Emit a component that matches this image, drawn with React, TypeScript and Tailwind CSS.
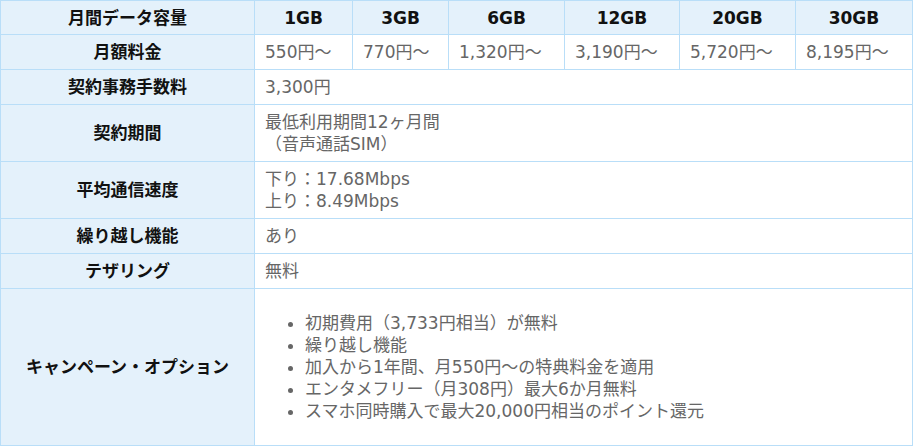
import React from "react";

const font = { fontFamily: '"DejaVu Sans", "Noto Sans CJK JP", sans-serif' };

const sizes = ["1GB", "3GB", "6GB", "12GB", "20GB", "30GB"];
const prices = ["550円～", "770円～", "1,320円～", "3,190円～", "5,720円～", "8,195円～"];

const th =
  "border border-[#b9def8] bg-[#e4f1fb] text-center align-middle font-bold text-[#111] p-0";
const td =
  "border border-[#b9def8] bg-white text-left align-middle text-[#666] pl-[10px] pr-[6px] py-0";

export default function App() {
  return (
    <div className="bg-white w-[914px] h-[447px]" style={font}>
      <table className="table-fixed border-collapse w-[912px] text-[17px] leading-[22px]">
        <colgroup>
          <col className="w-[254px]" />
          <col className="w-[98px]" />
          <col className="w-[96px]" />
          <col className="w-[116px]" />
          <col className="w-[115px]" />
          <col className="w-[116px]" />
          <col className="w-[117px]" />
        </colgroup>
        <tbody>
          <tr className="h-[34px]">
            <td className={th}>月間データ容量</td>
            {sizes.map((s) => (
              <td key={s} className={th}>
                {s}
              </td>
            ))}
          </tr>
          <tr className="h-[35px]">
            <td className={th}>月額料金</td>
            {prices.map((p) => (
              <td key={p} className={td}>
                {p}
              </td>
            ))}
          </tr>
          <tr className="h-[35px]">
            <td className={th}>契約事務手数料</td>
            <td className={td} colSpan={6}>
              3,300円
            </td>
          </tr>
          <tr className="h-[57px]">
            <td className={th}>契約期間</td>
            <td className={td} colSpan={6}>
              最低利用期間12ヶ月間
              <br />
              （音声通話SIM）
            </td>
          </tr>
          <tr className="h-[57px]">
            <td className={th}>平均通信速度</td>
            <td className={td} colSpan={6}>
              下り：17.68Mbps
              <br />
              上り：8.49Mbps
            </td>
          </tr>
          <tr className="h-[35px]">
            <td className={th}>繰り越し機能</td>
            <td className={td} colSpan={6}>
              あり
            </td>
          </tr>
          <tr className="h-[35px]">
            <td className={th}>テザリング</td>
            <td className={td} colSpan={6}>
              無料
            </td>
          </tr>
          <tr className="h-[157px]">
            <td className={th}>キャンペーン・オプション</td>
            <td className={td} colSpan={6}>
              <ul className="list-disc pl-[40px] my-0 marker:text-[#666]">
                <li>初期費用（3,733円相当）が無料</li>
                <li>繰り越し機能</li>
                <li>加入から1年間、月550円～の特典料金を適用</li>
                <li>エンタメフリー（月308円）最大6か月無料</li>
                <li>スマホ同時購入で最大20,000円相当のポイント還元</li>
              </ul>
            </td>
          </tr>
        </tbody>
      </table>
    </div>
  );
}
